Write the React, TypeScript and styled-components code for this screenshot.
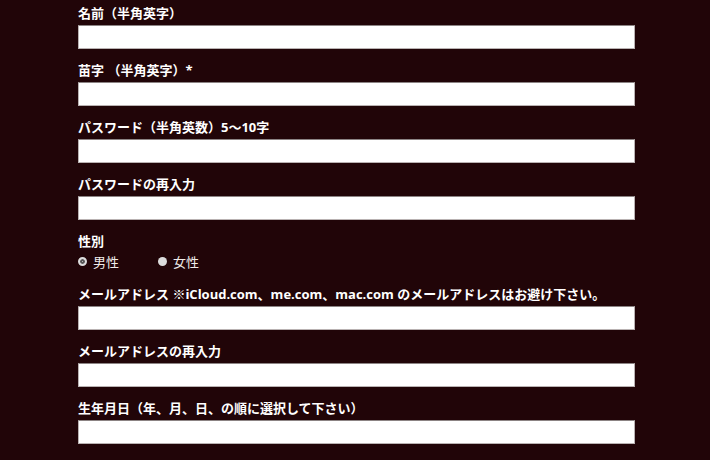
import React, { useState } from 'react';
import styled, { createGlobalStyle } from 'styled-components';

const GlobalStyle = createGlobalStyle`
  html, body {
    margin: 0;
    padding: 0;
    background-color: #210508;
  }
  body {
    font-family: "Open Sans", "Noto Sans CJK JP", sans-serif;
  }
`;

const fields = [
  { name: 'firstName', label: '名前（半角英字）', type: 'text' },
  { name: 'lastName', label: '苗字 （半角英字）*', type: 'text' },
  { name: 'password', label: 'パスワード（半角英数）5～10字', type: 'password' },
  { name: 'passwordConfirm', label: 'パスワードの再入力', type: 'password' },
];

const mailFields = [
  { name: 'email', label: 'メールアドレス ※iCloud.com、me.com、mac.com のメールアドレスはお避け下さい。', type: 'email' },
  { name: 'emailConfirm', label: 'メールアドレスの再入力', type: 'email' },
  { name: 'birthday', label: '生年月日（年、月、日、の順に選択して下さい）', type: 'text' },
];

const App = () => {
  const [gender, setGender] = useState('male');
  const [values, setValues] = useState<{ [key: string]: string }>({});

  const handleInputChange = (event: any) => {
    const { name, value } = event.target;
    setValues((prev) => ({ ...prev, [name]: value }));
  };

  const renderField = (field: { name: string; label: string; type: string }) => (
    <Field key={field.name}>
      <Label htmlFor={field.name}>{field.label}</Label>
      <TextInput
        id={field.name}
        name={field.name}
        type={field.type}
        value={values[field.name] || ''}
        onChange={handleInputChange}
      />
    </Field>
  );

  return (
    <>
      <GlobalStyle />
      <Container>
        <StyledForm onSubmit={(e) => e.preventDefault()}>
          {fields.map(renderField)}
          <Field>
            <Label as="div">性別</Label>
            <RadioRow>
              <RadioOption onClick={() => setGender('male')}>
                <RadioDot checked={gender === 'male'} />
                男性
              </RadioOption>
              <RadioOption onClick={() => setGender('female')}>
                <RadioDot checked={gender === 'female'} />
                女性
              </RadioOption>
            </RadioRow>
          </Field>
          {mailFields.map(renderField)}
        </StyledForm>
      </Container>
    </>
  );
};

export default App;

const Container = styled.div`
  width: 100%;
  min-height: 460px;
  background-color: #210508;
  padding-top: 4px;
  box-sizing: border-box;
`;

const StyledForm = styled.form`
  width: 557px;
  margin-left: 78px;
`;

const Field = styled.div`
  display: flex;
  flex-direction: column;
  margin-bottom: 12px;
`;

const Label = styled.label`
  display: block;
  color: #ffffff;
  font-size: 13px;
  font-weight: bold;
  line-height: 18px;
  margin-bottom: 3px;
  white-space: nowrap;
`;

const TextInput = styled.input`
  box-sizing: border-box;
  width: 100%;
  height: 24px;
  margin: 0;
  padding: 2px 6px;
  background-color: #ffffff;
  border: 1px solid #b9b2b2;
  border-top-color: #8c8484;
  outline: none;
  font-size: 13px;
  font-family: inherit;
`;

const RadioRow = styled.div`
  display: flex;
  align-items: center;
  height: 23px;
  margin-top: -3px;
`;

const RadioOption = styled.label`
  display: flex;
  align-items: center;
  width: 80px;
  color: #f0ecea;
  font-size: 13px;
  line-height: 18px;
  cursor: pointer;
`;

const RadioDot = styled.span<{ checked: boolean }>`
  box-sizing: border-box;
  display: inline-block;
  width: 9px;
  height: 9px;
  border-radius: 50%;
  margin-right: 6px;
  background-color: #dcdcdc;
  border: ${({ checked }) => (checked ? '2px solid #dcdcdc' : 'none')};
  box-shadow: ${({ checked }) => (checked ? 'inset 0 0 0 2px #555' : 'none')};
`;
